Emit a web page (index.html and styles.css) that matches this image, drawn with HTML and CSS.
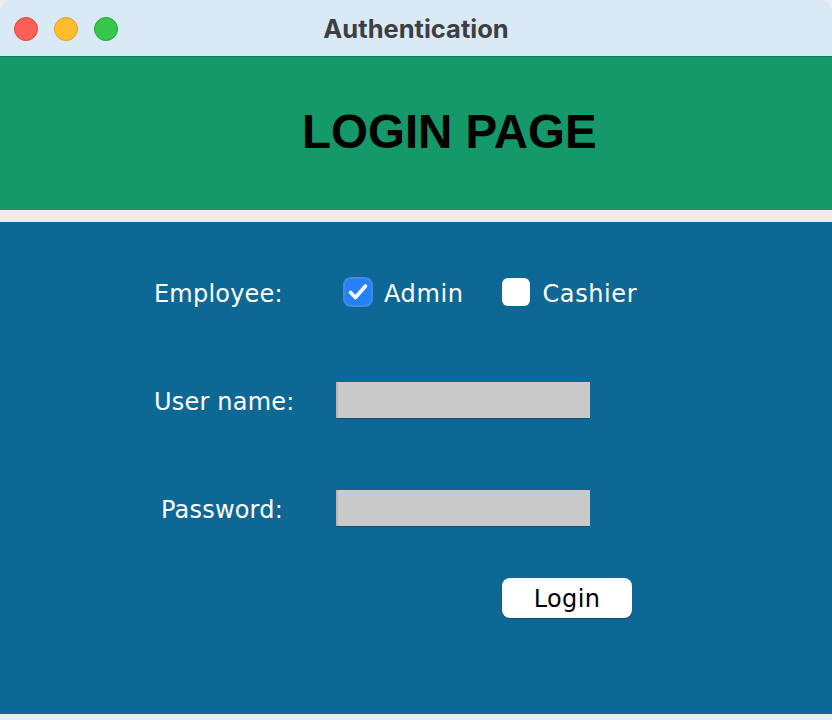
FILE: index.html
```html
<!DOCTYPE html>
<html lang="en">
<head>
<meta charset="utf-8">
<title>Authentication</title>
<link rel="stylesheet" href="styles.css">
</head>
<body>
<div class="window">
  <header class="titlebar">
    <div class="lights">
      <span class="light light-close"></span>
      <span class="light light-min"></span>
      <span class="light light-max"></span>
    </div>
    <div class="title">Authentication</div>
    <div class="spacer"></div>
  </header>
  <section class="banner">
    <h1 class="banner-title">LOGIN PAGE</h1>
  </section>
  <main class="panel">
    <div class="row">
      <span class="label">Employee:</span>
      <div class="choices">
        <label class="choice">
          <span class="box box-checked">
            <svg viewBox="0 0 26 26" width="26" height="26"><path d="M5.5 13.5l5 5L20.5 7" fill="none" stroke="#fff" stroke-width="3.6" stroke-linecap="round" stroke-linejoin="round"/></svg>
          </span>
          <span class="choice-text">Admin</span>
        </label>
        <label class="choice">
          <span class="box"></span>
          <span class="choice-text">Cashier</span>
        </label>
      </div>
    </div>
    <div class="row row-field">
      <span class="label">User name:</span>
      <div class="field"></div>
    </div>
    <div class="row row-field">
      <span class="label label-pass">Password:</span>
      <div class="field"></div>
    </div>
    <div class="row row-button">
      <button class="login" type="button">Login</button>
    </div>
  </main>
</div>
</body>
</html>
```
FILE: styles.css
```css
html, body {
  margin: 0;
  padding: 0;
  background: #ededed;
}
.window {
  width: 832px;
  height: 714px;
  display: flex;
  flex-direction: column;
  border-radius: 11px 11px 0 0;
  overflow: hidden;
  background: #ededed;
}
.titlebar {
  height: 56px;
  flex: none;
  background: #d9e9f5;
  display: grid;
  grid-template-columns: 1fr auto 1fr;
  align-items: center;
}
.lights {
  display: flex;
  gap: 16px;
  padding-left: 14px;
  padding-top: 1px;
}
.light {
  width: 24px;
  height: 24px;
  border-radius: 50%;
  box-sizing: border-box;
}
.light-close { background: #fe5f57; border: 1px solid #e2463f; }
.light-min { background: #febc2e; border: 1px solid #dfa023; }
.light-max { background: #35c84a; border: 1px solid #23a935; }
.title {
  font-family: Inter, "Liberation Sans", sans-serif;
  font-weight: 700;
  font-size: 25.5px;
  color: #3d3f44;
  padding-top: 1px;
}
.banner {
  height: 153px;
  flex: none;
  background: #15986a;
  border-top: 1px solid #0d8055;
  margin-bottom: 12px;
  box-sizing: content-box;
}
.banner-title {
  margin: 0;
  padding: 51px 0 0 302px;
  font-family: "Liberation Sans", Arial, sans-serif;
  font-weight: 700;
  font-size: 47.5px;
  line-height: 1;
  color: #000;
}
.panel {
  flex: 1;
  background: #0e6896;
  padding: 52px 0 0 154px;
  font-family: "DejaVu Sans", sans-serif;
  font-size: 24px;
  color: #fff;
}
.row {
  display: flex;
  align-items: center;
  height: 36px;
}
.row-field {
  margin-top: 72px;
}
.label {
  width: 182px;
  flex: none;
  padding-top: 3px;
  letter-spacing: 0.2px;
}
.label-pass {
  padding-left: 7px;
  width: 175px;
}
.choices {
  display: flex;
  align-items: center;
  padding-left: 9px;
  gap: 38px;
}
.choice {
  display: flex;
  align-items: center;
  gap: 13px;
}
.box {
  width: 28px;
  height: 28px;
  border-radius: 6px;
  background: #fff;
  display: flex;
  align-items: center;
  justify-content: center;
  box-sizing: border-box;
}
.box-checked {
  width: 26px;
  height: 26px;
  background: #2680f8;
  box-shadow: 0 0 0 2px rgba(87, 150, 240, 0.75);
}
.choice-text {
  line-height: 1;
  padding-top: 3px;
  letter-spacing: 0.6px;
}
.field {
  width: 254px;
  height: 36px;
  box-sizing: border-box;
  background: #cacaca;
  border-left: 2px solid #b7b7b7;
  box-shadow: 0 1px 0 rgba(0, 0, 0, 0.22);
}
.row-button {
  margin-top: 52px;
  height: 40px;
}
.login {
  margin-left: 348px;
  width: 130px;
  height: 40px;
  border: none;
  border-radius: 8px;
  background: #fff;
  color: #000;
  font-family: "DejaVu Sans", sans-serif;
  font-size: 24px;
  letter-spacing: 0.4px;
  padding: 2px 0 0;
  box-shadow: 0 1px 1px rgba(0, 0, 0, 0.25);
}
```
